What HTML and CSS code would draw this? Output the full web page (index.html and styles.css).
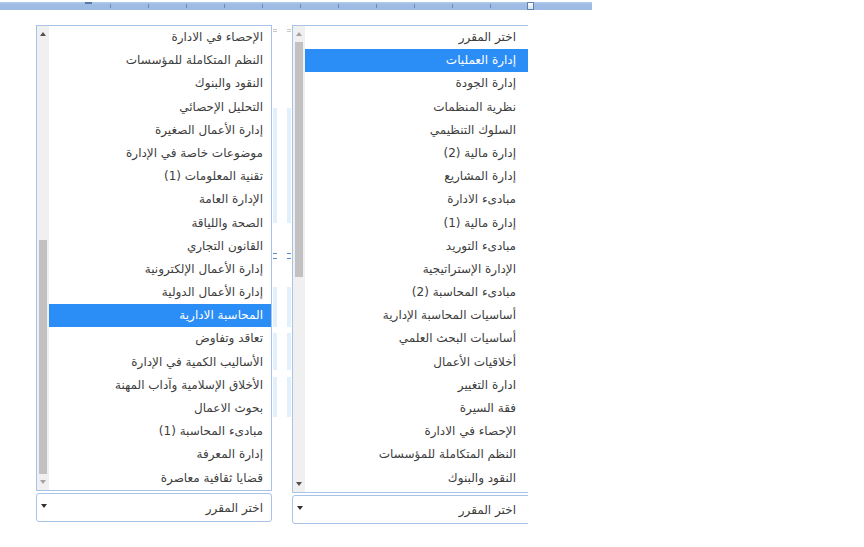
FILE: index.html
```html
<!DOCTYPE html>
<html lang="ar">
<head>
<meta charset="utf-8">
<link rel="stylesheet" href="styles.css">
</head>
<body>
<div class="ruler">
  <div class="ticks">
    <span class="tick"></span><span class="tick"></span><span class="tick"></span><span class="tick"></span>
    <span class="tick"></span><span class="tick"></span><span class="tick"></span><span class="tick"></span>
    <span class="tick"></span><span class="tick"></span><span class="tick"></span>
  </div>
  <span class="indent-mark"></span>
  <span class="margin-mark"></span>
</div>
<div class="stage">
  <div class="col col-left">
    <div class="listbox">
      <div class="sb">
        <div class="sb-btn"><span class="arr up"></span></div>
        <div class="sb-track"><div class="thumb thumb-left"></div></div>
        <div class="sb-btn"><span class="arr down off"></span></div>
      </div>
      <ul class="opts">
        <li>الإحصاء في الادارة</li>
        <li>النظم المتكاملة للمؤسسات</li>
        <li>النقود والبنوك</li>
        <li>التحليل الإحصائي</li>
        <li>إدارة الأعمال الصغيرة</li>
        <li>موضوعات خاصة في الإدارة</li>
        <li>تقنية المعلومات (1)</li>
        <li>الإدارة العامة</li>
        <li>الصحة واللياقة</li>
        <li>القانون التجاري</li>
        <li>إدارة الأعمال الإلكترونية</li>
        <li>إدارة الأعمال الدولية</li>
        <li class="sel">المحاسبة الادارية</li>
        <li>تعاقد وتفاوض</li>
        <li>الأساليب الكمية في الإدارة</li>
        <li>الأخلاق الإسلامية وآداب المهنة</li>
        <li>بحوث الاعمال</li>
        <li>مبادىء المحاسبة (1)</li>
        <li>إدارة المعرفة</li>
        <li>قضايا ثقافية معاصرة</li>
      </ul>
    </div>
    <div class="select"><span class="caret"></span><span class="val">اختر المقرر</span></div>
  </div>
  <div class="gap">
    <div class="gap-col">
      <span class="eq e1"></span>
      <span class="strip s1"></span>
      <span class="dash d1"></span>
      <span class="dash d2"></span>
      <span class="strip s2"></span>
      <span class="strip s3"></span>
      <span class="strip s4"></span>
    </div>
    <div class="gap-col">
      <span class="eq e1"></span>
      <span class="strip s1"></span>
      <span class="dash d1"></span>
      <span class="dash d2"></span>
      <span class="strip s2"></span>
      <span class="strip s3"></span>
      <span class="strip s4"></span>
    </div>
  </div>
  <div class="col col-right">
    <div class="listbox listbox-right">
      <div class="sb">
        <div class="sb-btn"><span class="arr up off"></span></div>
        <div class="sb-track"><div class="thumb thumb-right"></div></div>
        <div class="sb-btn"><span class="arr down"></span></div>
      </div>
      <ul class="opts opts-right">
        <li>اختر المقرر</li>
        <li class="sel">إدارة العمليات</li>
        <li>إدارة الجودة</li>
        <li>نظرية المنظمات</li>
        <li>السلوك التنظيمي</li>
        <li>إدارة مالية (2)</li>
        <li>إدارة المشاريع</li>
        <li>مبادىء الادارة</li>
        <li>إدارة مالية (1)</li>
        <li>مبادىء التوريد</li>
        <li>الإدارة الإستراتيجية</li>
        <li>مبادىء المحاسبة (2)</li>
        <li>أساسيات المحاسبة الإدارية</li>
        <li>أساسيات البحث العلمي</li>
        <li>أخلاقيات الأعمال</li>
        <li>ادارة التغيير</li>
        <li>فقة السيرة</li>
        <li>الإحصاء في الادارة</li>
        <li>النظم المتكاملة للمؤسسات</li>
        <li>النقود والبنوك</li>
      </ul>
    </div>
    <div class="select select-right"><span class="caret"></span><span class="val">اختر المقرر</span></div>
  </div>
</div>
</body>
</html>
```

FILE: styles.css
```css
* { box-sizing: border-box; }
html, body { margin: 0; padding: 0; background: #ffffff; }
body {
  width: 864px;
  height: 547px;
  overflow: hidden;
  font-family: "DejaVu Sans", "Noto Sans", sans-serif;
  color: #3d3d3d;
}

/* ruler */
.ruler {
  position: relative;
  margin-top: 2px;
  width: 592px;
  height: 8px;
  background: linear-gradient(#b2cbec 0, #9dbbe3 35%, #9dbbe3 100%);
}
.ticks {
  display: flex;
  gap: 37px;
  padding-left: 110px;
  padding-top: 2px;
}
.tick {
  width: 1px;
  height: 4px;
  background: #6d8cb5;
}
.indent-mark {
  position: absolute;
  left: 85px;
  top: 0;
  width: 7px;
  height: 2px;
  background: #5779a8;
}
.margin-mark {
  position: absolute;
  left: 527px;
  top: 0;
  width: 7px;
  height: 8px;
  border: 1px solid #5f81ad;
  background: linear-gradient(#ffffff, #d3def0);
}

/* stage */
.stage {
  display: flex;
  align-items: flex-start;
  margin-top: 15px;
  padding-left: 36px;
  width: 528px;
  overflow: hidden;
}
.col { display: flex; flex-direction: column; flex: none; }
.col-left { width: 236px; }
.col-right { width: 242px; }

.listbox {
  display: flex;
  height: 466px;
  border: 1px solid #a8c2e8;
  background: #ffffff;
}
.listbox-right { height: 468px; }

.sb {
  width: 12px;
  flex: none;
  display: flex;
  flex-direction: column;
  background: #f0f0f0;
}
.sb-btn {
  height: 16px;
  display: flex;
  align-items: center;
  justify-content: center;
}
.sb-track {
  flex: 1;
  display: flex;
  flex-direction: column;
}
.thumb {
  margin: 0 2px;
  width: 8px;
  background: #c1c1c1;
}
.thumb-left { margin-top: 198px; height: 234px; }
.thumb-right { margin-top: 0; height: 235px; }

.arr {
  width: 0;
  height: 0;
  border-left: 3px solid transparent;
  border-right: 3px solid transparent;
}
.arr.up { border-bottom: 4px solid #505050; }
.arr.down { border-top: 4px solid #505050; }
.arr.up.off { border-bottom-color: #a3a3a3; }
.arr.down.off { border-top-color: #a3a3a3; }

.opts {
  flex: 1;
  list-style: none;
  margin: 0;
  padding: 0;
  direction: rtl;
  font-size: 12px;
}
.opts li {
  height: 23.2px;
  line-height: 23.2px;
  padding-right: 8px;
  white-space: nowrap;
}
.opts-right li { padding-right: 17px; }
.opts li.sel {
  background: #2b8df6;
  color: #ffffff;
}

.select {
  margin-top: 2px;
  height: 29px;
  border: 1px solid #a8c2e8;
  border-radius: 3px;
  display: flex;
  align-items: center;
  justify-content: space-between;
  padding: 0 8px 0 4px;
  font-size: 12px;
  direction: ltr;
}
.select-right { margin-top: 2px; padding-right: 17px; }
.caret {
  width: 0;
  height: 0;
  border-left: 3px solid transparent;
  border-right: 3px solid transparent;
  border-top: 4px solid #303030;
  margin-top: -3px;
}
.val { direction: rtl; }

/* underlying document fragments visible between the lists */
.gap {
  width: 20px;
  flex: none;
  display: flex;
  justify-content: space-between;
  padding: 0 1px 0 1px;
}
.gap-col {
  width: 4px;
  display: flex;
  flex-direction: column;
}
.eq {
  height: 3px;
  margin-top: 4px;
  border-top: 1px solid #c8c8c8;
  border-bottom: 1px solid #c8c8c8;
}
.strip { background: #e2effc; }
.s1 { margin-top: 76px; height: 115px; }
.dash { height: 1px; background: #5a8fd6; }
.d1 { margin-top: 30px; }
.d2 { margin-top: 4px; }
.s2 { margin-top: 28px; height: 40px; }
.s3 { margin-top: 6px; height: 37px; }
.s4 { margin-top: 7px; height: 40px; }
```
